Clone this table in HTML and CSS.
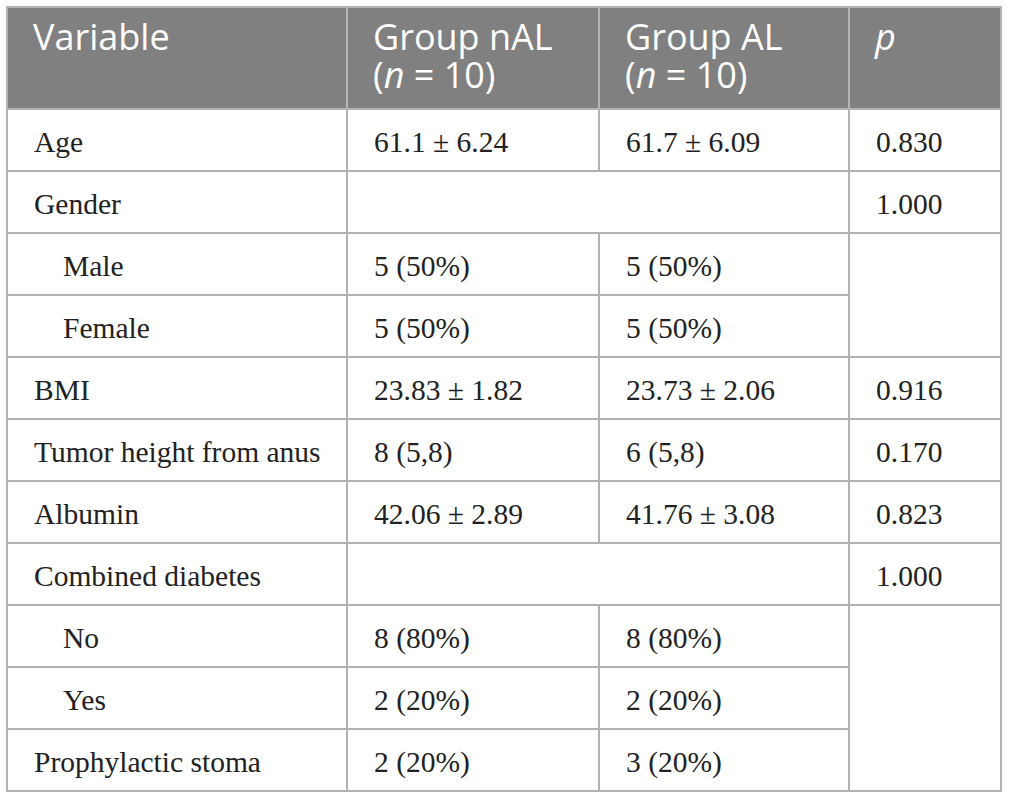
FILE: index.html
```html
<!DOCTYPE html>
<html>
<head>
<meta charset="utf-8">
<link rel="stylesheet" href="styles.css">
</head>
<body>
<table class="data">
  <colgroup>
    <col class="c1"><col class="c2"><col class="c3"><col class="c4">
  </colgroup>
  <thead>
    <tr>
      <th>Variable</th>
      <th>Group nAL<br>(<i>n</i> = 10)</th>
      <th>Group AL<br>(<i>n</i> = 10)</th>
      <th><i>p</i></th>
    </tr>
  </thead>
  <tbody>
    <tr><td>Age</td><td>61.1 ± 6.24</td><td>61.7 ± 6.09</td><td>0.830</td></tr>
    <tr><td>Gender</td><td colspan="2"></td><td>1.000</td></tr>
    <tr><td class="sub">Male</td><td>5 (50%)</td><td>5 (50%)</td><td rowspan="2"></td></tr>
    <tr><td class="sub">Female</td><td>5 (50%)</td><td>5 (50%)</td></tr>
    <tr><td>BMI</td><td>23.83 ± 1.82</td><td>23.73 ± 2.06</td><td>0.916</td></tr>
    <tr><td>Tumor height from anus</td><td>8 (5,8)</td><td>6 (5,8)</td><td>0.170</td></tr>
    <tr><td>Albumin</td><td>42.06 ± 2.89</td><td>41.76 ± 3.08</td><td>0.823</td></tr>
    <tr><td>Combined diabetes</td><td colspan="2"></td><td>1.000</td></tr>
    <tr><td class="sub">No</td><td>8 (80%)</td><td>8 (80%)</td><td rowspan="3"></td></tr>
    <tr><td class="sub">Yes</td><td>2 (20%)</td><td>2 (20%)</td></tr>
    <tr><td>Prophylactic stoma</td><td>2 (20%)</td><td>3 (20%)</td></tr>
  </tbody>
</table>
</body>
</html>
```

FILE: styles.css
```css
html, body {
  margin: 0;
  padding: 0;
  background: #ffffff;
}
body {
  padding: 6px 0 0 6px;
}
.data {
  border-collapse: collapse;
  width: 996px;
  table-layout: fixed;
  border: 2px solid #a9a9a9;
}
.c1 { width: 340px; }
.c2 { width: 252px; }
.c3 { width: 250px; }
.c4 { width: 152px; }
.data th,
.data td {
  border: 2px solid #b3b3b3;
  padding: 0 10px 0 26px;
  text-align: left;
}
.data th {
  background: #808080;
  color: #ffffff;
  font-family: "Open Sans", "DejaVu Sans", sans-serif;
  font-weight: 400;
  font-size: 36px;
  line-height: 38px;
  height: 102px;
  box-sizing: border-box;
  vertical-align: top;
  padding-top: 10px;
  padding-left: 25px;
}
.data td {
  font-family: "Liberation Serif", "Times New Roman", serif;
  font-size: 29.5px;
  color: #222222;
  height: 62px;
  box-sizing: border-box;
  vertical-align: middle;
  padding-top: 4px;
}
.data td.sub {
  padding-left: 55px;
}
```
